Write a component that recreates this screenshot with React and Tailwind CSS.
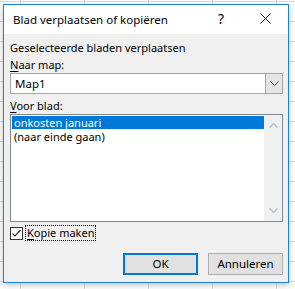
import React from "react";

const font = { fontFamily: '"Segoe UI", "Noto Sans", "Liberation Sans", sans-serif' };

export default function App() {
  return (
    <div
      className="relative w-[295px] h-[289px] overflow-hidden bg-white bg-[linear-gradient(to_right,#dadada_1px,transparent_1px),linear-gradient(to_bottom,#dadada_1px,transparent_1px)] bg-[size:64px_20px] bg-[position:20px_1px]"
      style={font}
    >
      <div className="absolute left-[3px] top-[4px] w-[286px] h-[279px] border border-[#1883d7] bg-[#f0f0f0] shadow-[0_2px_6px_rgba(0,0,0,0.25)] flex flex-col text-[11px] leading-[16px] text-black">
        {/* title bar */}
        <div className="h-[29px] bg-white flex items-center pl-[9px] relative shrink-0">
          <span className="text-[11.5px]">Blad verplaatsen of kopiëren</span>
          <span className="absolute left-[214px] top-[5px] text-[14px] leading-[18px]">?</span>
          <svg className="absolute left-[256px] top-[8px]" width="11" height="11" viewBox="0 0 11 11">
            <path d="M0.5 0.5 L10.5 10.5 M10.5 0.5 L0.5 10.5" stroke="#000" strokeWidth="1" />
          </svg>
        </div>
        {/* body */}
        <div className="flex flex-col pl-[6px] pr-[5px] pt-[6px]">
          <div>Geselecteerde bladen verplaatsen</div>
          <div className="mt-[1px]"><span className="underline underline-offset-2">N</span>aar map:</div>
          <div className="h-[21px] border border-[#a5a5a5] bg-white flex items-stretch">
            <div className="flex-1 flex items-center pl-[4px] text-[11.5px]">Map1</div>
            <div className="w-[17px] bg-[#e5e5e5] border-l border-[#a5a5a5] flex items-center justify-center">
              <svg width="9" height="5" viewBox="0 0 9 5">
                <path d="M0.5 0.5 L4.5 4.5 L8.5 0.5" stroke="#404040" fill="none" strokeWidth="1" />
              </svg>
            </div>
          </div>
          <div className="mt-[4px]"><span className="underline underline-offset-2">V</span>oor blad:</div>
          <div className="h-[108px] border border-[#828790] bg-white flex">
            <div className="flex-1 pt-[1px] pl-[1px]">
              <div className="h-[13px] leading-[13px] bg-[#0078d7] text-white pl-[2px]">onkosten januari</div>
              <div className="mt-[1px] h-[13px] leading-[13px] pl-[2px]">(naar einde gaan)</div>
            </div>
            <div className="w-[18px] bg-[#f0f0f0] flex flex-col items-center justify-between py-[8px]">
              <svg width="9" height="5" viewBox="0 0 9 5">
                <path d="M0.5 4.5 L4.5 0.5 L8.5 4.5" stroke="#c0c0c0" fill="none" strokeWidth="1.5" />
              </svg>
              <svg width="9" height="5" viewBox="0 0 9 5">
                <path d="M0.5 0.5 L4.5 4.5 L8.5 0.5" stroke="#c0c0c0" fill="none" strokeWidth="1.5" />
              </svg>
            </div>
          </div>
          <div className="mt-[3px] flex items-center h-[16px]">
            <div className="w-[13px] h-[13px] border border-[#333] bg-white flex items-center justify-center">
              <svg width="11" height="11" viewBox="0 0 11 11">
                <path d="M1.5 5.5 L4 8 L9.5 2" stroke="#333" fill="none" strokeWidth="1.2" />
              </svg>
            </div>
            <div className="ml-[2px] px-[1px] border border-dotted border-black leading-[14px]">
              <span className="underline underline-offset-2">K</span>opie maken
            </div>
          </div>
          <div className="mt-[12px] flex justify-end gap-[10px]">
            <button className="w-[75px] h-[22px] border-2 border-[#0078d7] bg-[#e1e1e1] text-[11.5px]">OK</button>
            <button className="w-[75px] h-[22px] border border-[#adadad] bg-[#e1e1e1] text-[11.5px]">Annuleren</button>
          </div>
        </div>
      </div>
    </div>
  );
}
